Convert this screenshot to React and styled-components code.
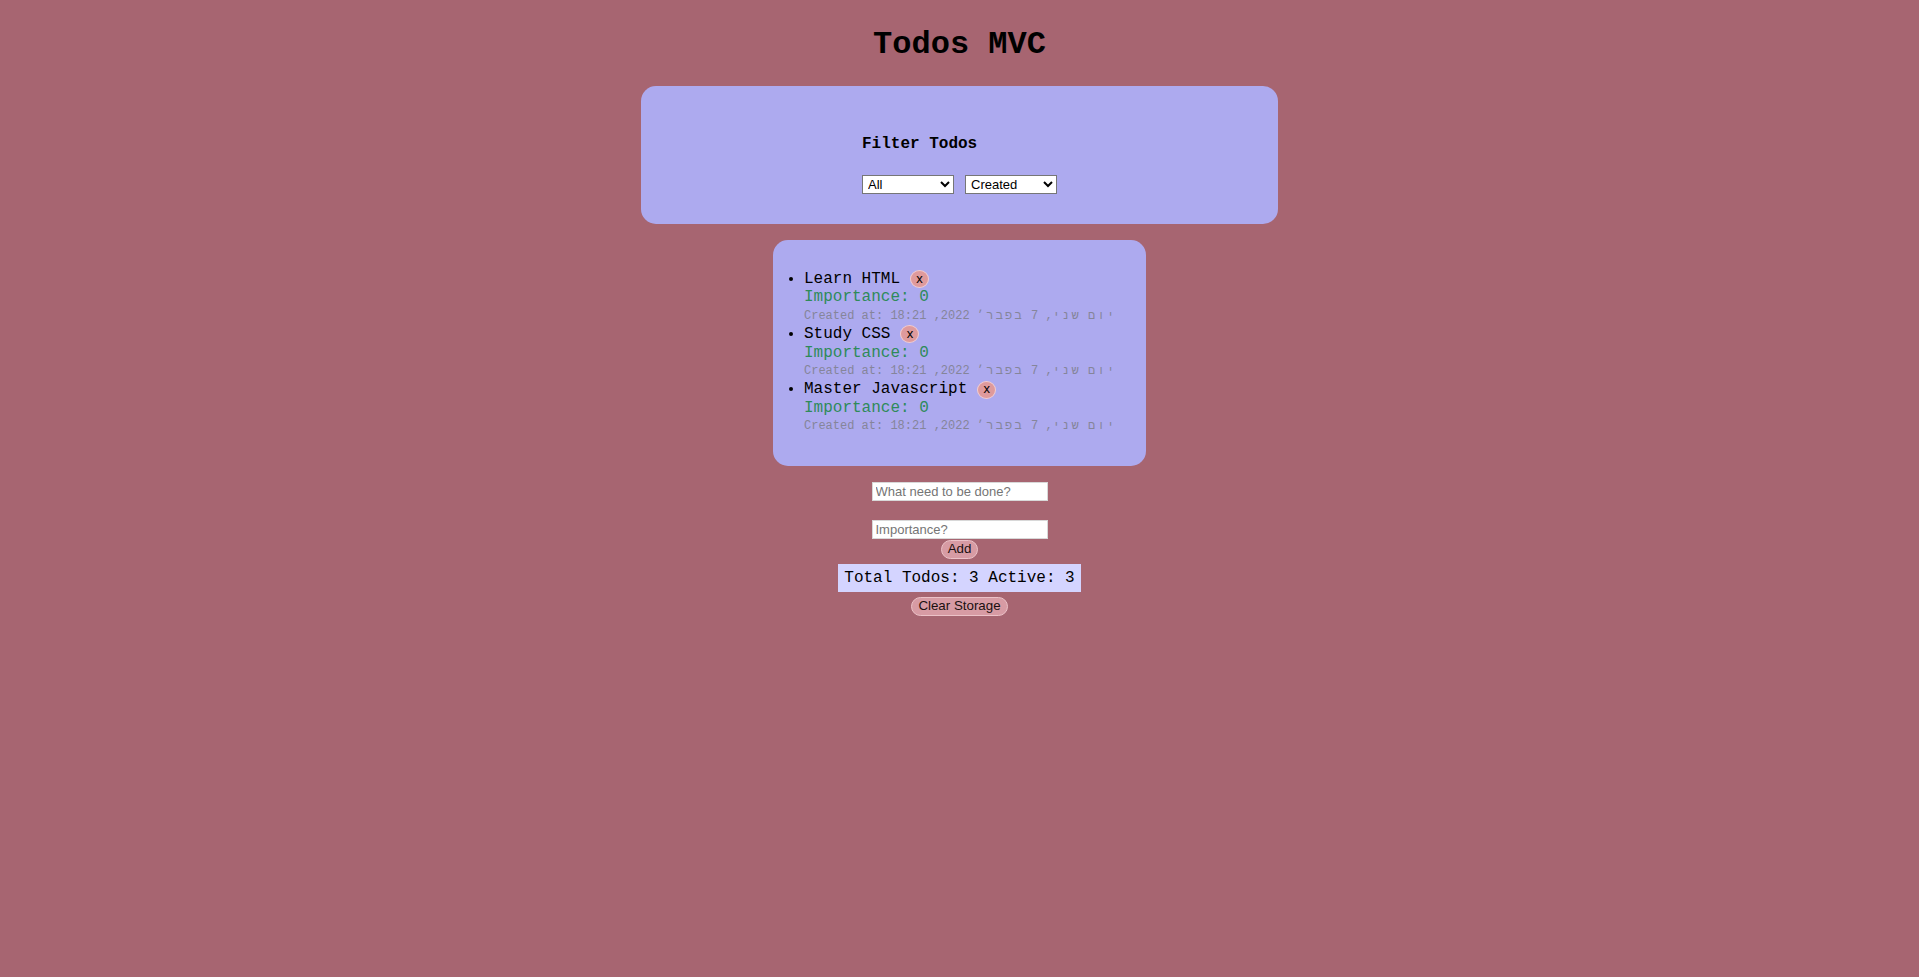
import styled, { createGlobalStyle } from "styled-components";

const GlobalStyle = createGlobalStyle`
  html,
  body {
    margin: 0;
    min-height: 100%;
    background: #a76571;
  }

  body {
    font-family: "Liberation Mono", "DejaVu Sans Mono", monospace;
    color: #000;
  }
`;

const StyledPage = styled.div`
  display: flex;
  flex-direction: column;
  align-items: center;
  padding-top: 27px;
`;

const StyledTitle = styled.h1`
  margin: 0 0 23px;
  font-size: 32px;
  line-height: 36px;
  font-weight: bold;
`;

const StyledPanel = styled.section`
  box-sizing: border-box;
  width: ${({ width }) => width};
  background: #adaaef;
  border-radius: 15px;
`;

const StyledFilterPanel = styled(StyledPanel)`
  display: flex;
  justify-content: center;
  height: 138px;
  padding: 49px 0 30px;
`;

const StyledFilterBox = styled.div`
  display: flex;
  flex-direction: column;
  align-items: flex-start;
  gap: 22px;
`;

const StyledFilterTitle = styled.h4`
  margin: 0;
  font-size: 16px;
  line-height: 18px;
  font-weight: bold;
`;

const StyledSelectRow = styled.div`
  display: flex;
  gap: 11px;
`;

const StyledSelect = styled.select`
  box-sizing: border-box;
  width: 92px;
  height: 19px;
  padding: 0 1px;
  border: 1px solid #767676;
  border-radius: 0;
  background: #fff;
  font-family: "Liberation Sans", Arial, sans-serif;
  font-size: 13px;
  color: #000;
`;

const StyledTodoPanel = styled(StyledPanel)`
  margin-top: 16px;
  padding: 30px 16px;
`;

const StyledList = styled.ul`
  margin: 0;
  padding-left: 15px;
  line-height: 18.4px;
  font-size: 16px;
`;

const StyledItem = styled.li`
  list-style: disc;
`;

const StyledLine = styled.div`
  display: flex;
  align-items: center;
  height: 18.4px;
  white-space: nowrap;
  color: ${({ color }) => color || "#000"};
  font-size: ${({ size }) => size || "16px"};
`;

const StyledCreated = styled.span`
  white-space: pre;
`;

const StyledHebrew = styled.span`
  letter-spacing: 2.2px;
`;

const StyledDelete = styled.button`
  box-sizing: border-box;
  width: 19px;
  height: 18px;
  margin-left: 10px;
  padding: 0 0 2px;
  border: 1px solid #f2cdd0;
  border-radius: 50%;
  background: #df9a9c;
  font-family: "Liberation Sans", Arial, sans-serif;
  font-size: 13px;
  line-height: 13px;
  color: #000;
`;

const StyledForm = styled.form`
  display: flex;
  flex-direction: column;
  align-items: center;
  margin-top: 16px;
`;

const StyledInput = styled.input`
  box-sizing: border-box;
  width: 176px;
  height: 19px;
  margin-bottom: ${({ gap }) => gap || "0"};
  padding: 0 3px;
  border: 1px solid #d8d8d8;
  background: #fff;
  font-family: "Liberation Sans", Arial, sans-serif;
  font-size: 13px;

  &::placeholder {
    color: #757575;
  }
`;

const StyledPillButton = styled.button`
  box-sizing: border-box;
  height: 19px;
  margin-top: ${({ top }) => top};
  padding: 0 6px;
  border: 1px solid #ecc2c8;
  border-radius: 10px;
  background: #d79ba4;
  font-family: "Liberation Sans", Arial, sans-serif;
  font-size: 13.33px;
  line-height: 16px;
  color: #1a1010;
`;

const StyledStats = styled.div`
  margin-top: 5px;
  padding: 5px 6px;
  background: #d4d4ff;
  font-size: 16px;
  line-height: 18px;
  white-space: nowrap;
`;

const todos = [
  { title: "Learn HTML", importance: 0 },
  { title: "Study CSS", importance: 0 },
  { title: "Master Javascript", importance: 0 },
];

function CreatedAt() {
  return (
    <StyledCreated>
      Created at: <StyledHebrew>יום</StyledHebrew>{" "}
      <StyledHebrew>שני</StyledHebrew>, 7 <StyledHebrew>בפבר׳</StyledHebrew>{" "}
      2022, 18:21
    </StyledCreated>
  );
}

export default function App() {
  return (
    <>
      <GlobalStyle />
      <StyledPage>
        <StyledTitle>Todos MVC</StyledTitle>

        <StyledFilterPanel width="637px">
          <StyledFilterBox>
            <StyledFilterTitle>Filter Todos</StyledFilterTitle>
            <StyledSelectRow>
              <StyledSelect defaultValue="all">
                <option value="all">All</option>
                <option value="active">Active</option>
                <option value="done">Done</option>
              </StyledSelect>
              <StyledSelect defaultValue="created">
                <option value="created">Created</option>
                <option value="title">Title</option>
                <option value="importance">Importance</option>
              </StyledSelect>
            </StyledSelectRow>
          </StyledFilterBox>
        </StyledFilterPanel>

        <StyledTodoPanel width="373px">
          <StyledList>
            {todos.map((todo) => (
              <StyledItem key={todo.title}>
                <StyledLine>
                  {todo.title}
                  <StyledDelete type="button">x</StyledDelete>
                </StyledLine>
                <StyledLine color="#2f8a5a">
                  Importance: {todo.importance}
                </StyledLine>
                <StyledLine color="#85859a" size="12px">
                  <CreatedAt />
                </StyledLine>
              </StyledItem>
            ))}
          </StyledList>
        </StyledTodoPanel>

        <StyledForm onSubmit={(e) => e.preventDefault()}>
          <StyledInput placeholder="What need to be done?" gap="19px" />
          <StyledInput placeholder="Importance?" />
          <StyledPillButton top="1px">Add</StyledPillButton>
        </StyledForm>

        <StyledStats>Total Todos: 3 Active: 3</StyledStats>
        <StyledPillButton top="5px" type="button">
          Clear Storage
        </StyledPillButton>
      </StyledPage>
    </>
  );
}
